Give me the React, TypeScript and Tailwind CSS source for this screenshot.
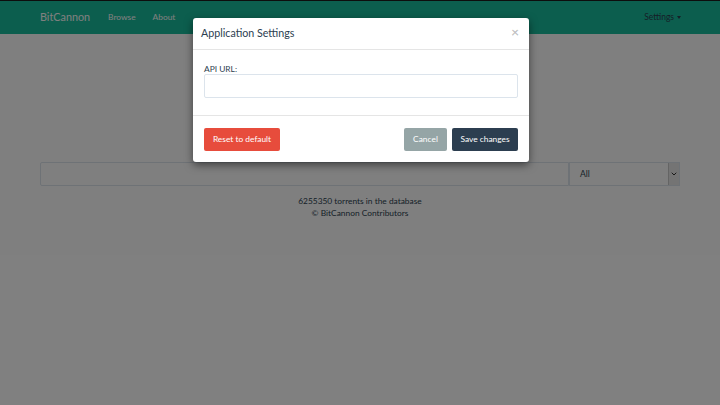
import { ChevronDown } from "lucide-react";

const FONT = { fontFamily: "Lato, 'Open Sans', sans-serif" };

function Navbar() {
  return (
    <div className="h-[34px] border-t border-[#1a1a1a] bg-[#18bc9c] flex items-center px-[40px]">
      <span className="text-[10.8px] text-white mr-[18px]">BitCannon</span>
      <span className="text-[8.4px] text-white mr-[17px]">Browse</span>
      <span className="text-[8.4px] text-white">About</span>
      <span className="ml-auto mr-[-1px] text-[8.5px] text-[#2c3e50] flex items-center gap-[3px]">
        Settings
        <span className="inline-block w-0 h-0 border-l-[2.5px] border-r-[2.5px] border-t-[3px] border-l-transparent border-r-transparent border-t-[#2c3e50]" />
      </span>
    </div>
  );
}

function SettingsModal() {
  return (
    <div className="absolute left-[193px] top-[18px] w-[336px] rounded-[3px] bg-white shadow-[0_3px_9px_rgba(0,0,0,0.5)]">
      <div className="h-[32px] flex items-center px-[8px] border-b border-[#e5e5e5]">
        <span className="text-[10.7px] text-[#2c3e50]">Application Settings</span>
        <span className="ml-auto mr-[2px] mt-[-3px] text-[14px] font-bold leading-none text-black/25">×</span>
      </div>
      <div className="h-[65px] px-[11px] pt-[13px]">
        <div className="text-[8.4px] leading-[12px] text-[#2c3e50]">API URL:</div>
        <div className="mt-[-1px] h-[24px] rounded-[2px] border border-[#dce4ec] bg-white" />
      </div>
      <div className="h-[47px] border-t border-[#e5e5e5] px-[11px] flex items-center">
        <button className="h-[23px] w-[76px] rounded-[2px] bg-[#e74c3c] text-[8.4px] text-white">
          Reset to default
        </button>
        <button className="ml-auto h-[23px] w-[43px] rounded-[2px] bg-[#95a5a6] text-[8.4px] text-white">
          Cancel
        </button>
        <button className="ml-[5px] h-[23px] w-[66px] rounded-[2px] bg-[#2c3e50] text-[8.4px] text-white">
          Save changes
        </button>
      </div>
    </div>
  );
}

export default function App() {
  return (
    <div className="relative w-[720px] h-[405px] overflow-hidden bg-white" style={FONT}>
      <Navbar />
      <div className="px-[40px] pt-[128px]">
        <div className="flex h-[24px]">
          <div className="flex-1 border border-[#dce4ec] rounded-l-[2px] bg-white" />
          <div className="w-[111px] border border-[#dce4ec] bg-white flex items-center pl-[10px]">
            <span className="text-[8.6px] text-[#2c3e50]">All</span>
            <span className="ml-auto h-full w-[11px] bg-[#e8e8e8] border-l border-[#c8c8c8] flex items-center justify-center">
              <ChevronDown size={8} strokeWidth={3} className="text-[#333]" />
            </span>
          </div>
        </div>
        <div className="mt-[9px] text-center text-[8.4px] leading-[12px] text-[#2c3e50]">
          <div>6255350 torrents in the database</div>
          <div>© BitCannon Contributors</div>
        </div>
      </div>
      <div className="absolute inset-0 bg-black/50" />
      <SettingsModal />
    </div>
  );
}
